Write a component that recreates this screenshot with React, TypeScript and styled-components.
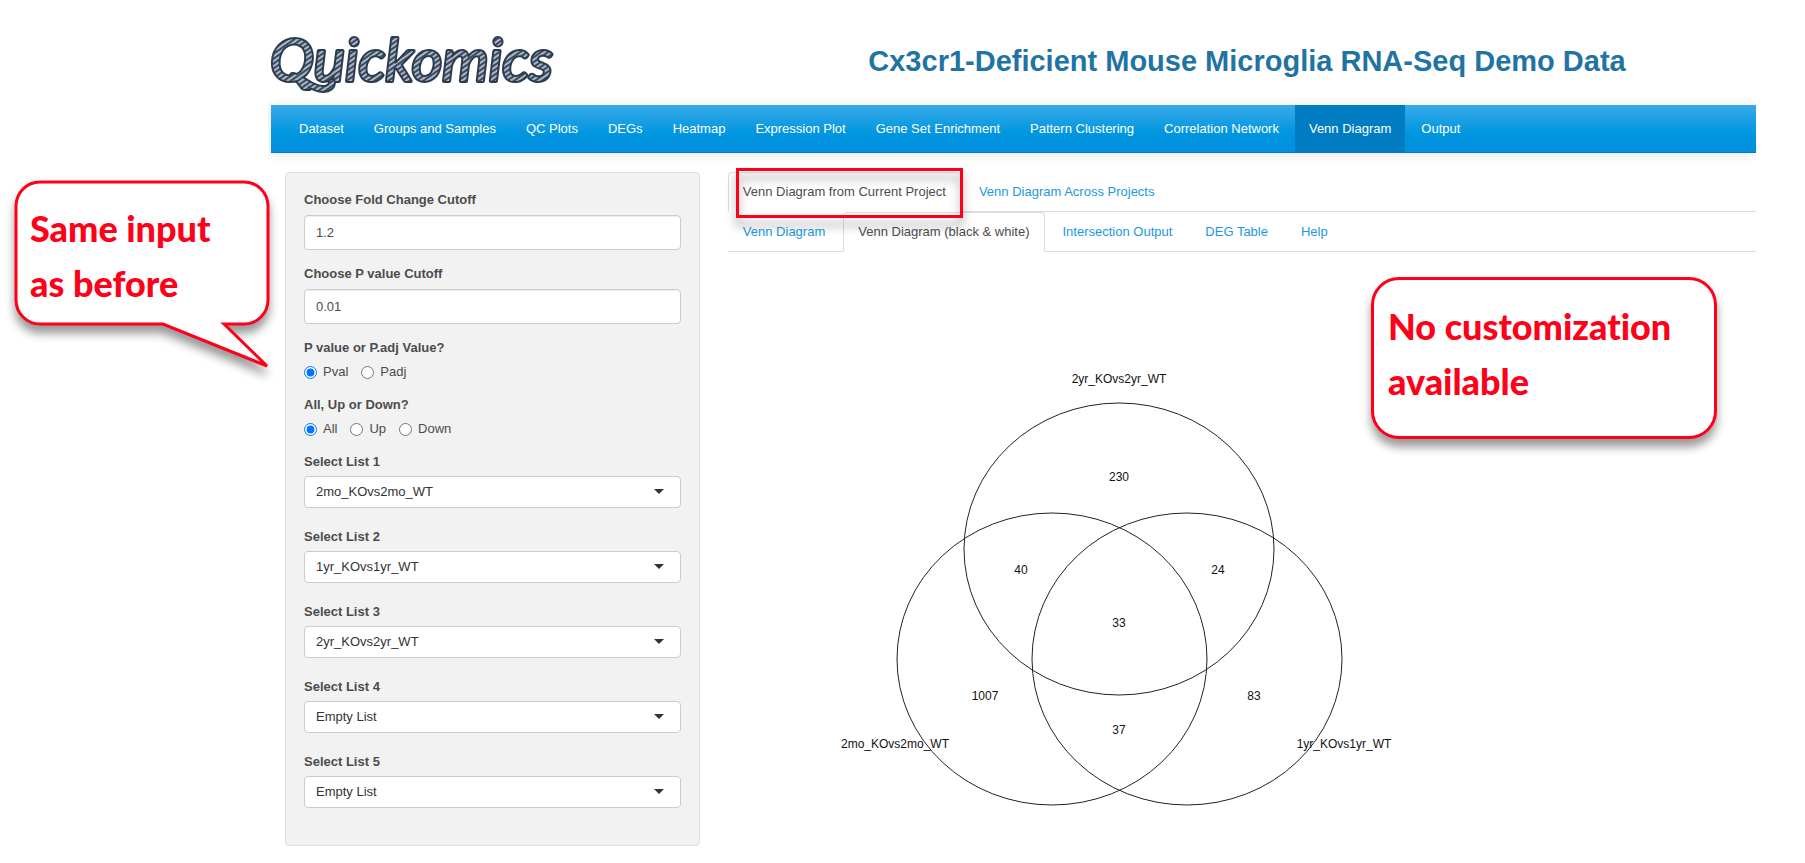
import React from 'react';
import styled, { createGlobalStyle } from 'styled-components';

const GlobalStyle = createGlobalStyle`
  *, *::before, *::after { box-sizing: border-box; }
  body {
    margin: 0;
    background: #fff;
    color: #4c4c4c;
    font: 13px/20px "Liberation Sans", Arial, sans-serif;
  }
`;

const Page = styled.div`
  position: relative;
  padding: 0 49px 18px 271px;
`;

const Header = styled.header`
  display: flex;
  align-items: center;
  height: 105px;
`;

const Logo = styled.svg`
  flex: none;
  width: 296px;
  height: 90px;
  overflow: visible;
`;

const Title = styled.h1`
  flex: 1;
  margin: 0 0 0 185px;
  padding: 16px 14px 0 0;
  color: #1f74a3;
  font-size: 29px;
  line-height: 32px;
  text-align: center;
  height: 32px;
  display: flex;
  align-items: center;
  justify-content: center;
  white-space: nowrap;
`;

const Navbar = styled.nav`
  display: flex;
  gap: 2px;
  height: 48px;
  padding-left: 14px;
  background: linear-gradient(#3aaae8, #0096e0 60%, #008fde);
  border-bottom: 1px solid #007cc3;
  box-shadow: 0 1px 10px rgba(0, 0, 0, 0.12);
  clip-path: inset(-10px 0 -12px -3px);
`;

const NavLink = styled.a<{ $active?: boolean }>`
  padding: 14px;
  color: #fff;
  line-height: 20px;
  text-decoration: none;
  white-space: nowrap;
  background: ${(p) => (p.$active ? '#007cc3' : 'transparent')};
`;

const Columns = styled.div`
  display: grid;
  grid-template-columns: 23fr 57fr;
  gap: 28px;
  padding: 19px 0 0 14px;
`;

const Sidebar = styled.form`
  padding: 17px 18px 18px;
  background: #f2f2f2;
  border: 1px solid #dfdfdf;
  border-radius: 4px;
`;

const Field = styled.div`
  margin-bottom: 14px;
`;

const SelectField = styled.div`
  margin-bottom: 19px;
`;

const Label = styled.label`
  display: block;
  margin-bottom: 5px;
  font-weight: bold;
`;

const SelectLabel = styled(Label)`
  margin-bottom: 4px;
`;

const TextInput = styled.input`
  display: block;
  width: 100%;
  height: 35px;
  padding: 0 11px;
  color: #4c4c4c;
  font: inherit;
  background: #fff;
  border: 1px solid #ccc;
  border-radius: 4px;
  box-shadow: inset 0 1px 1px rgba(0, 0, 0, 0.07);
`;

const RadioGroup = styled.fieldset`
  margin: 0 0 14px;
  padding: 0;
  border: 0;
`;

const Legend = styled.legend`
  padding: 0;
  margin-bottom: 5px;
  font-weight: bold;
`;

const Radios = styled.div`
  display: flex;
  gap: 13px;
`;

const RadioLabel = styled.label`
  display: flex;
  align-items: center;
  gap: 6px;
  height: 18px;
`;

const Radio = styled.input`
  width: 13px;
  height: 13px;
  margin: 0;
`;

const SelectBox = styled.div`
  position: relative;

  &::after {
    content: '';
    position: absolute;
    top: 13px;
    right: 17px;
    border: 5px solid transparent;
    border-top-color: #333;
    border-bottom: 0;
    pointer-events: none;
  }
`;

const Select = styled.select`
  display: block;
  appearance: none;
  width: 100%;
  height: 32px;
  padding: 0 11px;
  color: #333;
  font: inherit;
  background: #fff;
  border: 1px solid #ccc;
  border-radius: 4px;
`;

const Main = styled.main`
  position: relative;
  min-width: 0;
`;

const Tabs = styled.nav`
  display: flex;
  gap: 3px;
  border-bottom: 1px solid #ddd;
`;

const Tab = styled.a<{ $active?: boolean }>`
  margin-bottom: -1px;
  padding: 9px 14px;
  color: ${(p) => (p.$active ? '#4c4c4c' : '#1a99e0')};
  background: ${(p) => (p.$active ? '#fff' : 'transparent')};
  border: 1px solid ${(p) => (p.$active ? '#ddd' : 'transparent')};
  border-bottom-color: ${(p) => (p.$active ? '#fff' : 'transparent')};
  border-radius: 4px 4px 0 0;
  text-decoration: none;
  white-space: nowrap;
`;

const Plot = styled.svg`
  display: block;
  width: 783px;
  max-width: 100%;
  height: auto;

  text {
    fill: #111;
    font: 12px "Liberation Sans", Arial, sans-serif;
    text-anchor: middle;
  }
`;

const Highlight = styled.div`
  position: absolute;
  top: -4px;
  left: 8px;
  width: 227px;
  height: 50px;
  border: 3px solid #ff0019;
  filter: drop-shadow(0 8px 5px rgba(0, 0, 0, 0.4));
  pointer-events: none;
`;

const calloutText = `
  margin: 0;
  color: #ff0019;
  font: 900 36px/55px Lato, sans-serif;
  font-variant-ligatures: none;
  white-space: nowrap;
`;

const SpeechBubble = styled.aside`
  position: absolute;
  top: 180px;
  left: 14px;
  width: 257px;
  height: 190px;
  padding: 21px 16px;
`;

const BubbleShape = styled.svg`
  position: absolute;
  inset: 0;
  overflow: visible;
  filter: drop-shadow(0 8px 5px rgba(0, 0, 0, 0.4));
`;

const BubbleText = styled.p`
  ${calloutText}
  position: relative;
`;

const Note = styled.aside`
  position: absolute;
  top: 105px;
  right: 39px;
  width: 346px;
  height: 162px;
  padding: 19px 14px;
  background: #fff;
  border: 3px solid #ff0019;
  border-radius: 28px;
  box-shadow: 0 8px 10px rgba(0, 0, 0, 0.4);
`;

const NoteText = styled.p`
  ${calloutText}
`;

const navItems = [
  'Dataset', 'Groups and Samples', 'QC Plots', 'DEGs', 'Heatmap', 'Expression Plot',
  'Gene Set Enrichment', 'Pattern Clustering', 'Correlation Network', 'Venn Diagram', 'Output',
];

const projectTabs = ['Venn Diagram from Current Project', 'Venn Diagram Across Projects'];
const viewTabs = ['Venn Diagram', 'Venn Diagram (black & white)', 'Intersection Output', 'DEG Table', 'Help'];

const comparisons = ['2mo_KOvs2mo_WT', '1yr_KOvs1yr_WT', '2yr_KOvs2yr_WT', 'Empty List'];
const selected = [
  comparisons[0], comparisons[1], comparisons[2], comparisons[3], comparisons[3],
];

const sets = [
  { cx: 391, cy: 297 },
  { cx: 324, cy: 407 },
  { cx: 459, cy: 407 },
];

const plotLabels = [
  { x: 391, y: 131, text: '2yr_KOvs2yr_WT' },
  { x: 167, y: 496, text: '2mo_KOvs2mo_WT' },
  { x: 616, y: 496, text: '1yr_KOvs1yr_WT' },
  { x: 391, y: 229, text: '230' },
  { x: 293, y: 322, text: '40' },
  { x: 490, y: 322, text: '24' },
  { x: 391, y: 375, text: '33' },
  { x: 257, y: 448, text: '1007' },
  { x: 526, y: 448, text: '83' },
  { x: 391, y: 482, text: '37' },
];

function RadioField({ name, legend, options }: { name: string; legend: string; options: string[] }) {
  return (
    <RadioGroup>
      <Legend>{legend}</Legend>
      <Radios>
        {options.map((option, i) => (
          <RadioLabel key={option}>
            <Radio type="radio" name={name} defaultChecked={i === 0} />
            {option}
          </RadioLabel>
        ))}
      </Radios>
    </RadioGroup>
  );
}

function QuickomicsLogo() {
  const swash = 'M22 68C32 70 40 81 52 81C58 81 61 78 61 74';
  return (
    <Logo viewBox="0 0 296 90" role="img" aria-label="Quickomics">
      <defs>
        <pattern id="rope" width="4" height="4" patternUnits="userSpaceOnUse" patternTransform="rotate(-35)">
          <rect width="4" height="4" fill="#3a4a5e" />
          <rect width="4" height="2" fill="#a9b6c7" />
        </pattern>
      </defs>
      <g
        fontFamily="Lato, sans-serif"
        fontStyle="italic"
        fontSize="59"
        strokeLinejoin="round"
        strokeLinecap="round"
      >
        <path d={swash} fill="none" stroke="#2d3b4d" strokeWidth="8" />
        <text x="-1" y="73" fill="#2d3b4d" stroke="#2d3b4d" strokeWidth="4">Quickomics</text>
        <path d={swash} fill="none" stroke="url(#rope)" strokeWidth="4" />
        <text x="-1" y="73" fill="url(#rope)" aria-hidden="true">Quickomics</text>
      </g>
    </Logo>
  );
}

export default function App() {
  return (
    <>
      <GlobalStyle />
      <Page>
        <Header>
          <QuickomicsLogo />
          <Title>Cx3cr1-Deficient Mouse Microglia RNA-Seq Demo Data</Title>
        </Header>
        <Navbar>
          {navItems.map((item) => (
            <NavLink key={item} href="#" $active={item === 'Venn Diagram'}>{item}</NavLink>
          ))}
        </Navbar>
        <Columns>
          <Sidebar>
            <Field>
              <Label htmlFor="fold-change">Choose Fold Change Cutoff</Label>
              <TextInput id="fold-change" defaultValue="1.2" />
            </Field>
            <Field>
              <Label htmlFor="p-value">Choose P value Cutoff</Label>
              <TextInput id="p-value" defaultValue="0.01" />
            </Field>
            <RadioField name="p-kind" legend="P value or P.adj Value?" options={['Pval', 'Padj']} />
            <RadioField name="direction" legend="All, Up or Down?" options={['All', 'Up', 'Down']} />
            {selected.map((value, i) => (
              <SelectField key={i}>
                <SelectLabel htmlFor={`list-${i}`}>Select List {i + 1}</SelectLabel>
                <SelectBox>
                  <Select id={`list-${i}`} defaultValue={value}>
                    {comparisons.map((c) => <option key={c}>{c}</option>)}
                  </Select>
                </SelectBox>
              </SelectField>
            ))}
          </Sidebar>
          <Main>
            <Tabs>
              {projectTabs.map((t, i) => <Tab key={t} href="#" $active={i === 0}>{t}</Tab>)}
            </Tabs>
            <Tabs>
              {viewTabs.map((t, i) => <Tab key={t} href="#" $active={i === 1}>{t}</Tab>)}
            </Tabs>
            <Plot viewBox="0 0 783 590" role="img" aria-label="Venn diagram of three comparisons">
              {sets.map((s) => (
                <ellipse key={s.cx} cx={s.cx} cy={s.cy} rx="155" ry="146" fill="none" stroke="#222" />
              ))}
              {plotLabels.map((l) => <text key={l.text} x={l.x} y={l.y}>{l.text}</text>)}
            </Plot>
            <Highlight />
            <Note>
              <NoteText>No customization<br />available</NoteText>
            </Note>
          </Main>
        </Columns>
        <SpeechBubble>
          <BubbleShape width="257" height="190" viewBox="0 0 257 190" aria-hidden="true">
            <path
              d="M26 2H230a24 24 0 0 1 24 24V120a24 24 0 0 1-24 24H210L253 186L149 144H26a24 24 0 0 1-24-24V26a24 24 0 0 1 24-24Z"
              fill="#fff"
              stroke="#ff0019"
              strokeWidth="3"
            />
          </BubbleShape>
          <BubbleText>Same input<br />as before</BubbleText>
        </SpeechBubble>
      </Page>
    </>
  );
}
